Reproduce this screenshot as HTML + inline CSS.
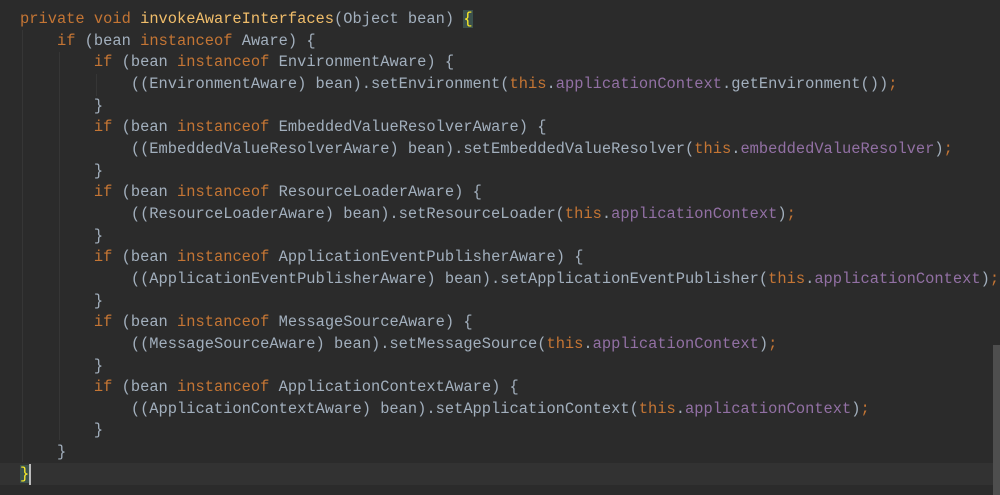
<!DOCTYPE html>
<html><head><style>
body{margin:0;width:1000px;height:495px;background:#2b2b2b;overflow:hidden;position:relative}
pre{margin:0;position:absolute;left:20px;top:9px;font-family:"Liberation Mono",monospace;font-size:15.4px;line-height:21.65px;color:#a2afbd}
.k{color:#c47534}.m{color:#f0bd6a}.f{color:#9270a4}
.cur{position:absolute;left:0;top:463px;width:993px;height:22px;background:#323232}
.sb{position:absolute;left:993px;top:345px;width:7px;height:150px;background:#4e4e4e}
.br{background:#3b514d;color:#ffef28}
.caret{position:absolute;left:29px;top:464px;width:2px;height:21px;background:#bbb}
.g{position:absolute;width:1px;background:#363636}
</style></head><body>
<div class="cur"></div>
<div class="g" style="left:22px;top:30px;height:432px"></div>
<div class="g" style="left:59px;top:52px;height:388px"></div>
<div class="g" style="left:96px;top:74px;height:22px"></div>
<div class="sb"></div>
<pre><span class="k">private void </span><span class="m">invokeAwareInterfaces</span>(Object bean) <span class="br">{</span>
    <span class="k">if </span>(bean <span class="k">instanceof </span>Aware) {
        <span class="k">if </span>(bean <span class="k">instanceof </span>EnvironmentAware) {
            ((EnvironmentAware) bean).setEnvironment(<span class="k">this</span>.<span class="f">applicationContext</span>.getEnvironment())<span class="k">;</span>
        }
        <span class="k">if </span>(bean <span class="k">instanceof </span>EmbeddedValueResolverAware) {
            ((EmbeddedValueResolverAware) bean).setEmbeddedValueResolver(<span class="k">this</span>.<span class="f">embeddedValueResolver</span>)<span class="k">;</span>
        }
        <span class="k">if </span>(bean <span class="k">instanceof </span>ResourceLoaderAware) {
            ((ResourceLoaderAware) bean).setResourceLoader(<span class="k">this</span>.<span class="f">applicationContext</span>)<span class="k">;</span>
        }
        <span class="k">if </span>(bean <span class="k">instanceof </span>ApplicationEventPublisherAware) {
            ((ApplicationEventPublisherAware) bean).setApplicationEventPublisher(<span class="k">this</span>.<span class="f">applicationContext</span>)<span class="k">;</span>
        }
        <span class="k">if </span>(bean <span class="k">instanceof </span>MessageSourceAware) {
            ((MessageSourceAware) bean).setMessageSource(<span class="k">this</span>.<span class="f">applicationContext</span>)<span class="k">;</span>
        }
        <span class="k">if </span>(bean <span class="k">instanceof </span>ApplicationContextAware) {
            ((ApplicationContextAware) bean).setApplicationContext(<span class="k">this</span>.<span class="f">applicationContext</span>)<span class="k">;</span>
        }
    }
<span class="br">}</span></pre>
<div class="caret"></div>
</body></html>
